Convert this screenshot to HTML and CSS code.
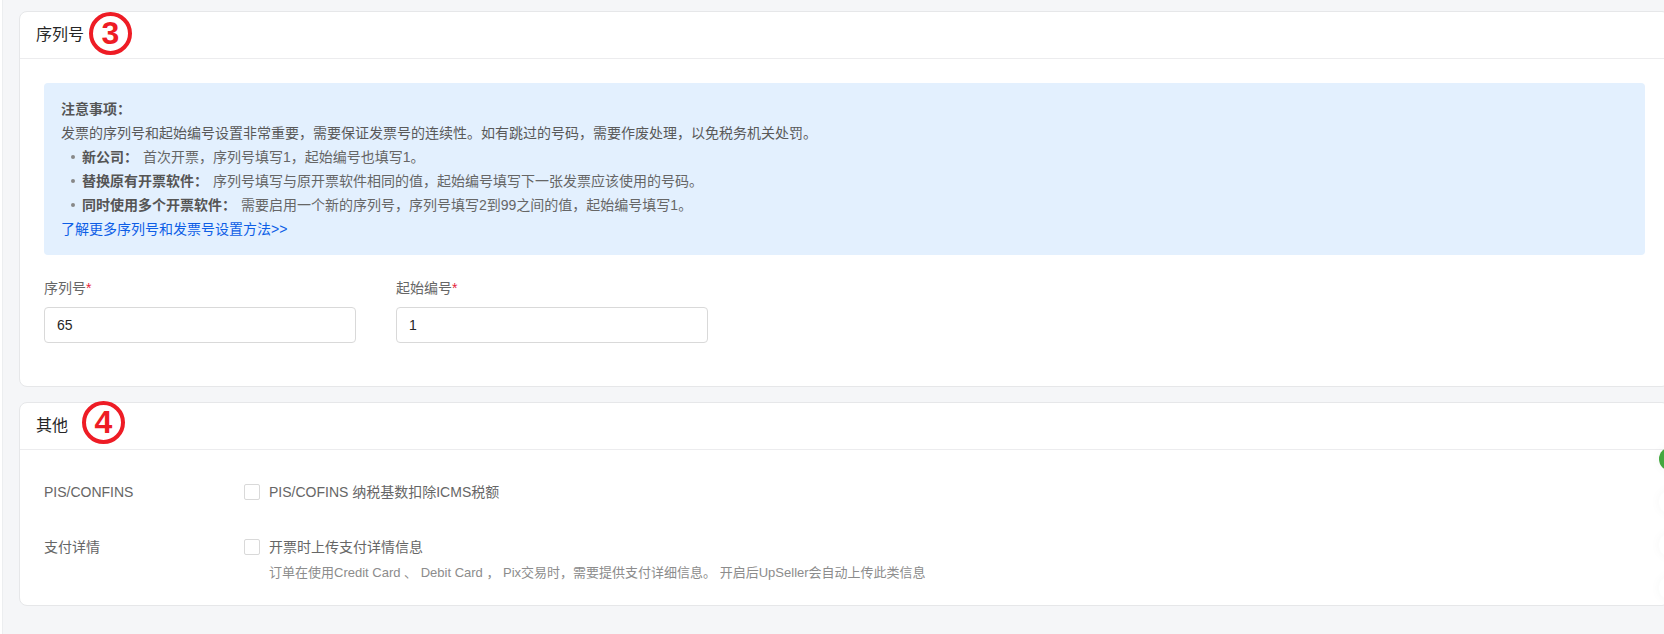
FILE: index.html
```html
<!DOCTYPE html>
<html lang="zh">
<head>
<meta charset="utf-8">
<title>发票设置</title>
<link rel="stylesheet" href="styles.css">
</head>
<body>
<div class="page">
  <section class="card">
    <header class="card-head">
      <h2 class="card-title">序列号</h2>
      <span class="mark mark-3">3</span>
    </header>
    <div class="card-body">
      <div class="notice">
        <div class="strong">注意事项：</div>
        <div>发票的序列号和起始编号设置非常重要，需要保证发票号的连续性。如有跳过的号码，需要作废处理，以免税务机关处罚。</div>
        <ul class="notice-list">
          <li><b class="strong">新公司：</b><span class="note-text">首次开票，序列号填写1，起始编号也填写1。</span></li>
          <li><b class="strong">替换原有开票软件：</b><span class="note-text">序列号填写与原开票软件相同的值，起始编号填写下一张发票应该使用的号码。</span></li>
          <li><b class="strong">同时使用多个开票软件：</b><span class="note-text">需要启用一个新的序列号，序列号填写2到99之间的值，起始编号填写1。</span></li>
        </ul>
        <a class="link" href="#">了解更多序列号和发票号设置方法&gt;&gt;</a>
      </div>
      <div class="fields">
        <label class="field">
          <span class="field-label">序列号<em class="req">*</em></span>
          <input class="input" type="text" value="65">
        </label>
        <label class="field">
          <span class="field-label">起始编号<em class="req">*</em></span>
          <input class="input" type="text" value="1">
        </label>
      </div>
    </div>
  </section>

  <section class="card">
    <header class="card-head">
      <h2 class="card-title">其他</h2>
      <span class="mark mark-4">4</span>
    </header>
    <div class="card-body other">
      <div class="row">
        <div class="row-label">PIS/CONFINS</div>
        <div class="row-main">
          <label class="check"><span class="box"></span>PIS/COFINS 纳税基数扣除ICMS税额</label>
        </div>
      </div>
      <div class="row">
        <div class="row-label">支付详情</div>
        <div class="row-main">
          <label class="check"><span class="box"></span>开票时上传支付详情信息</label>
          <p class="hint">订单在使用Credit Card 、 Debit Card ， Pix交易时，需要提供支付详细信息。 开启后UpSeller会自动上传此类信息</p>
        </div>
      </div>
    </div>
  </section>
</div>

<div class="float-bar">
  <span class="dot dot-green"></span>
  <span class="dot"></span>
  <span class="dot"></span>
  <span class="dot"></span>
</div>
</body>
</html>
```

FILE: styles.css
```css
* { box-sizing: border-box; }

html, body {
  margin: 0;
  height: 100%;
  overflow: hidden;
}

body {
  background: #fff;
  color: #595959;
  font-family: "Liberation Sans", "Noto Sans CJK SC", sans-serif;
  font-size: 14px;
  line-height: 24px;
}

.page {
  width: 1672px;
  height: 634px;
  margin-left: 2px;
  padding: 11px 0 0 16px;
  background: #f5f6f8;
  border-left: 1px solid #eceef0;
  display: flex;
  flex-direction: column;
  gap: 15px;
}

.card {
  width: 1651px;
  background: #fff;
  border: 1px solid #e6e7e9;
  border-radius: 8px;
}

.card-head {
  position: relative;
  height: 47px;
  padding: 0 16px;
  display: flex;
  align-items: center;
  border-bottom: 1px solid #ececee;
}

.card-title {
  margin: 0;
  color: #262626;
  font-size: 16px;
  font-weight: 400;
}

.mark {
  position: absolute;
  top: 0;
  width: 43px;
  height: 43px;
  border: 4px solid #ee1c25;
  border-radius: 50%;
  color: #ee1c25;
  font-size: 32px;
  font-weight: 700;
  line-height: 35px;
  text-align: center;
}

.mark-3 { left: 69px; }
.mark-4 { left: 62px; top: -2px; }

.card-body { padding: 24px 24px 43px; }

.notice {
  padding: 14px 17px;
  background: #e3f0fe;
  border-radius: 4px;
}

.strong { font-weight: 700; color: #555; }

.notice-list {
  margin: 0;
  padding: 0;
  list-style: none;
}

.notice-list li {
  position: relative;
  padding-left: 21px;
  color: #666;
}

.notice-list li::before {
  content: "";
  position: absolute;
  left: 10px;
  top: 10px;
  width: 4px;
  height: 4px;
  border-radius: 50%;
  background: #888;
}

.note-text { margin-left: 5px; }

.link {
  color: #0d5ee6;
  text-decoration: none;
}

.fields {
  display: flex;
  gap: 40px;
  margin-top: 22px;
}

.field {
  width: 312px;
  display: flex;
  flex-direction: column;
  gap: 7px;
}

.field-label {
  line-height: 23px;
  color: #666;
}

.req {
  color: #e5243b;
  font-style: normal;
}

.input {
  height: 36px;
  padding: 0 12px;
  color: #262626;
  font: inherit;
  background: #fff;
  border: 1px solid #d9d9d9;
  border-radius: 4px;
  outline: none;
}

.other {
  padding: 30px 24px 20px;
  display: flex;
  flex-direction: column;
  gap: 31px;
}

.row { display: flex; }

.row-label {
  width: 200px;
  flex: none;
  color: #666;
}

.check {
  display: flex;
  align-items: center;
  gap: 9px;
  color: #666;
}

.box {
  width: 16px;
  height: 16px;
  background: #fff;
  border: 1px solid #d9d9d9;
  border-radius: 2px;
}

.hint {
  margin: 2px 0 0 25px;
  color: #8c8c8c;
  font-size: 13px;
  line-height: 24px;
}

.float-bar {
  position: fixed;
  top: 447px;
  left: 1659px;
  display: flex;
  flex-direction: column;
  gap: 19px;
}

.dot {
  width: 24px;
  height: 24px;
  border-radius: 50%;
  background: #fff;
  box-shadow: 0 0 12px rgba(0, 0, 0, 0.04);
}

.dot-green { background: #43a83f; }
```
